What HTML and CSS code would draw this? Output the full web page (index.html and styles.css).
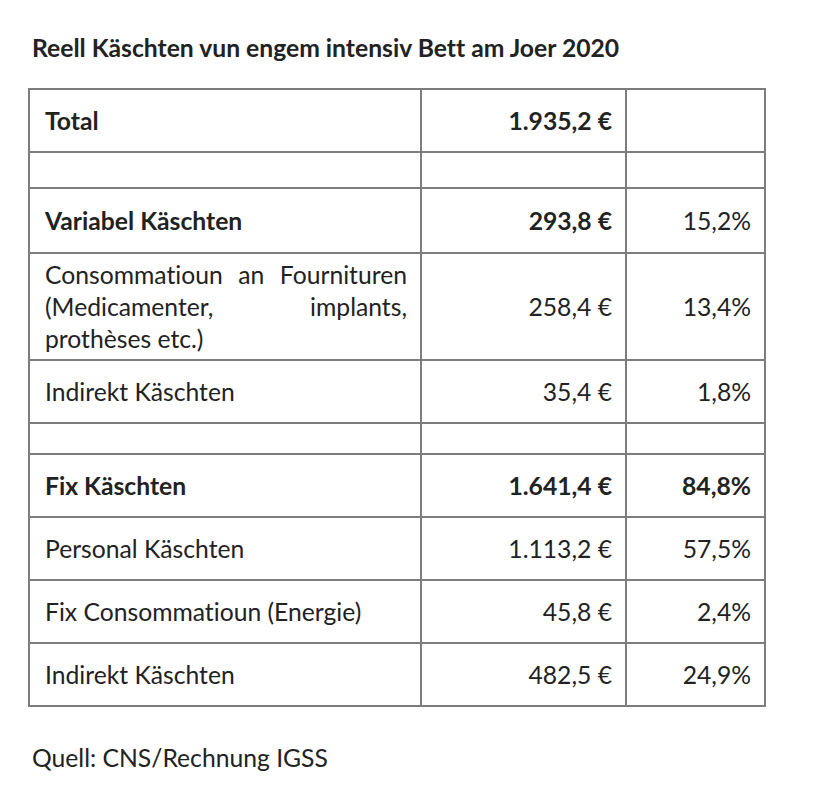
FILE: index.html
```html
<!DOCTYPE html>
<html lang="lb">
<head>
<meta charset="utf-8">
<title>Reell Käschten</title>
<link rel="stylesheet" href="styles.css">
</head>
<body>
<div class="page">
  <h1 class="title">Reell Käschten vun engem intensiv Bett am Joer 2020</h1>
  <table class="costs">
    <colgroup>
      <col class="c-label">
      <col class="c-amount">
      <col class="c-pct">
    </colgroup>
    <tr class="r-std bold"><td>Total</td><td class="num">1.935,2 €</td><td class="num"></td></tr>
    <tr class="r-gap"><td></td><td></td><td></td></tr>
    <tr class="r-std r-var bold"><td>Variabel Käschten</td><td class="num">293,8 €</td><td class="num normal">15,2%</td></tr>
    <tr class="r-tall"><td class="just">Consommatioun an Fournituren (Medicamenter, implants, prothèses etc.)</td><td class="num">258,4 €</td><td class="num">13,4%</td></tr>
    <tr class="r-std"><td>Indirekt Käschten</td><td class="num">35,4 €</td><td class="num">1,8%</td></tr>
    <tr class="r-gap2"><td></td><td></td><td></td></tr>
    <tr class="r-std bold"><td>Fix Käschten</td><td class="num">1.641,4 €</td><td class="num">84,8%</td></tr>
    <tr class="r-std"><td>Personal Käschten</td><td class="num">1.113,2 €</td><td class="num">57,5%</td></tr>
    <tr class="r-std"><td>Fix Consommatioun (Energie)</td><td class="num">45,8 €</td><td class="num">2,4%</td></tr>
    <tr class="r-std"><td>Indirekt Käschten</td><td class="num">482,5 €</td><td class="num">24,9%</td></tr>
  </table>
  <p class="source">Quell: CNS/Rechnung IGSS</p>
</div>
</body>
</html>
```
FILE: styles.css
```css
html, body {
  margin: 0;
  padding: 0;
  background: #ffffff;
}
.page {
  padding: 32px 0 0 28px;
  font-family: Lato, "Open Sans", sans-serif;
  font-variant-ligatures: none;
  color: #222222;
}
.title {
  margin: 0 0 0 4px;
  font-size: 24.7px;
  font-weight: 700;
  line-height: 32px;
}
.costs {
  margin-top: 24px;
  border-collapse: collapse;
  table-layout: fixed;
  width: 736px;
  font-size: 24.7px;
}
.c-label { width: 392px; }
.c-amount { width: 205px; }
.c-pct { width: 139px; }
.costs td {
  border: 2px solid #7d7d7d;
  padding: 0 13px 0 15px;
  vertical-align: middle;
  line-height: 32px;
}
.r-std td { height: 61px; }
.r-var td { height: 63px; }
.r-gap td { height: 34px; }
.r-gap2 td { height: 29px; }
.r-tall td { height: 105px; }
.bold td { font-weight: 700; }
.bold td.normal { font-weight: 400; }
.num { text-align: right; }
.just { text-align: justify; }
.source {
  margin: 35px 0 0 4px;
  font-size: 24.7px;
  line-height: 32px;
}
```
